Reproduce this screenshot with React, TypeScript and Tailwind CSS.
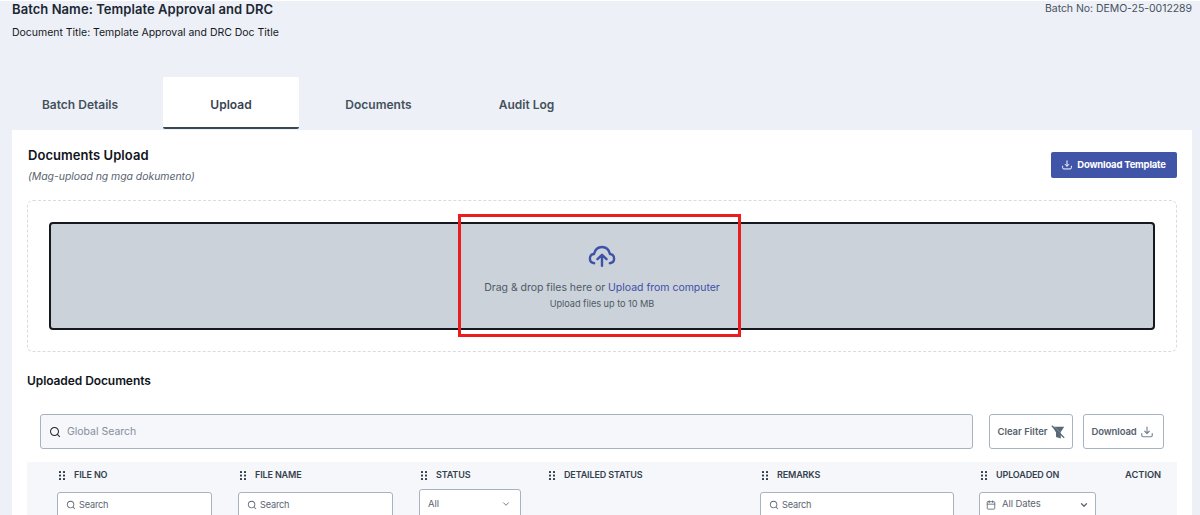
import { RiSearchLine } from "react-icons/ri";
import { Calendar, ChevronDown } from "lucide-react";

function DownloadIcon({ className }: { className?: string }) {
  return (
    <svg viewBox="0 0 24 24" fill="none" stroke="currentColor" strokeWidth={2.4} className={className}>
      <path d="M12 2v12.500M7.500 10.500l4.500 4.500 4.500-4.500M1.500 15v3.500A3 3 0 0 0 4.500 21.500h15a3 3 0 0 0 3-3V15" strokeLinecap="round" strokeLinejoin="round" />
    </svg>
  );
}

function CloudIcon() {
  return (
    <svg viewBox="0 0 28 22" fill="none" stroke="currentColor" strokeWidth={2.4} strokeLinecap="round" strokeLinejoin="round" className="w-7 h-[22px] text-[#3f51a8]">
      <path d="M6.200 18.200C3.600 18 1.900 16 1.900 13.600C1.900 11.200 3.600 9.300 6 9C7 4.800 10 2 14 2C18 2 21 4.800 22 9C24.400 9.300 26.100 11.200 26.100 13.600C26.100 16 24.400 18 21.800 18.200" />
      <path d="M14 20.800V10.500M9.500 14.200L14 9.800l4.500 4.400" />
    </svg>
  );
}

function FilterOffIcon() {
  return (
    <svg viewBox="0 0 14 14" className="size-3.5 text-[#5b6876]">
      <path d="M1.500 1.800H13.200L9.800 7v6.500L5 12V7.500Z" fill="currentColor" />
      <path d="M2.200 .8L13.800 11.800" stroke="#fff" strokeWidth={0.3} />
      <path d="M.8 .8L13.200 12.800" stroke="currentColor" strokeWidth={1.2} />
    </svg>
  );
}

function Grip() {
  return (
    <svg viewBox="0 0 6 9" className="w-1.5 h-[9px] fill-[#2f3a47]">
      {[0, 3.5, 7].map((y) => (
        <g key={y}>
          <rect x="0" y={y} width="2" height="2" rx="0.5" />
          <rect x="4" y={y} width="2" height="2" rx="0.5" />
        </g>
      ))}
    </svg>
  );
}

function ColumnSearch({ className }: { className: string }) {
  return (
    <div className={`h-[26px] bg-white border border-[#a9b2bf] rounded-[3px] flex items-center pl-2 pb-px gap-[3px] text-[#5b6571] ${className}`}>
      <RiSearchLine className="size-2.5" />
      <span className="text-[9.2px] tracking-[-0.2px]">Search</span>
    </div>
  );
}

const columns = ["FILE NO", "FILE NAME", "STATUS", "DETAILED STATUS", "REMARKS", "UPLOADED ON"];

export default function App() {
  return (
    <div className="w-[1200px] h-[515px] overflow-hidden bg-[#edf0f6] border-t border-white font-['Inter',sans-serif]">
      <header className="h-[76px] pl-3 pr-2 flex justify-between">
        <div>
          <h1 className="text-[13px] leading-[17px] tracking-[0.06px] font-semibold text-[#1b2733]">Batch Name: Template Approval and DRC</h1>
          <p className="mt-[7px] text-[10.5px] leading-4 tracking-[-0.02px] text-[#15191e]">Document Title: Template Approval and DRC Doc Title</p>
        </div>
        <p className="text-[10.5px] leading-[15px] tracking-[-0.05px] text-[#47525e]">Batch No: DEMO-25-0012289</p>
      </header>

      <nav className="h-[53px] pl-3 flex text-[12px] font-semibold text-[#44505c]">
        <div className="w-[136px] h-[52px] pt-[3px] flex items-center justify-center">Batch Details</div>
        <div className="ml-[15px] w-[136px] h-[52px] pt-[5px] flex items-center justify-center bg-white border-b-2 border-[#374955] rounded-[2px] text-[#37434f]">Upload</div>
        <div className="ml-[11px] w-[137px] h-[52px] pt-[3px] flex items-center justify-center">Documents</div>
        <div className="ml-[11px] w-[137px] h-[52px] pt-[3px] flex items-center justify-center">Audit Log</div>
      </nav>

      <main className="mx-2 ml-3 h-[400px] bg-white px-[15px]">
        <div className="h-[70px] flex justify-between">
          <div className="pt-4">
            <h2 className="pl-px text-[13px] leading-[18px] tracking-[0.05px] font-semibold text-[#10141b]">Documents Upload</h2>
            <p className="mt-[5px] pl-px text-[10.5px] leading-4 tracking-[-0.06px] italic text-[#5a6470]">(Mag-upload ng mga dokumento)</p>
          </div>
          <button className="mt-[22px] w-[126px] h-[26px] rounded-[2px] bg-[#4054a8] text-white text-[9.5px] tracking-[-0.2px] font-bold flex items-center justify-center gap-[5px]">
            <DownloadIcon className="size-2.5" />
            Download Template
          </button>
        </div>

        <div className="relative h-[152px] border border-dashed border-[#d8dce1] rounded-md px-[21px] pt-[21px]">
          <div className="h-[108px] bg-[#cbd2da] border-2 border-[#15181c] rounded-[4px] flex flex-col items-center pt-[21px]">
            <CloudIcon />
            <p className="mt-[13px] text-[10.5px] leading-4 tracking-[-0.02px] text-[#4e5a66]">
              Drag &amp; drop files here or <span className="text-[#3f4fa6]">Upload from computer</span>
            </p>
            <p className="mt-px text-[9.2px] leading-[14px] tracking-[-0.03px] text-[#4e5a66]">Upload files up to 10 MB</p>
          </div>
          <div className="absolute left-[430px] top-[13px] w-[283px] h-[123px] border-[3px] border-[#ec1b1e]" />
        </div>

        <h2 className="mt-5 text-[12px] leading-[18px] tracking-[-0.08px] font-semibold text-[#10141b]">Uploaded Documents</h2>

        <div className="mt-6 ml-[13px] h-[35px] flex text-[#56616e]">
          <div className="w-[933px] h-[35px] bg-[#f5f7fb] border border-[#a9b2bf] rounded-[3px] flex items-center pl-2 gap-1.5">
            <RiSearchLine className="size-3 text-[#1f252c]" />
            <span className="pt-px text-[10.5px] tracking-[-0.02px] text-[#868e9b]">Global Search</span>
          </div>
          <button className="ml-4 w-[84px] pt-px border border-[#a9b2bf] rounded-[3px] flex items-center justify-center gap-[3px] text-[9.5px] font-semibold">
            Clear Filter
            <FilterOffIcon />
          </button>
          <button className="ml-2.5 w-[81px] pt-px pr-[3px] border border-[#a9b2bf] rounded-[3px] flex items-center justify-center gap-1 text-[9.5px] tracking-[-0.1px] font-semibold">
            Download
            <DownloadIcon className="size-3 text-[#7b8794]" />
          </button>
        </div>

        <div className="mt-[13px] h-[60px] bg-[#f5f7fa] pl-[30px]">
          <div className="h-[27px] pb-px grid grid-cols-[181px_181px_128px_213px_219px_146px_1fr] items-center text-[9.3px] font-semibold text-[#36414d]">
            {columns.map((name) => (
              <div key={name} className="flex items-center gap-[9px] pl-[2px] text-[9px] tracking-[-0.14px]">
                <Grip />
                {name}
              </div>
            ))}
            <div>ACTION</div>
          </div>
          <div className="grid grid-cols-[181px_181px_341px_219px_1fr] pt-[3px]">
            <ColumnSearch className="w-[155px]" />
            <ColumnSearch className="w-[155px]" />
            <div className="-mt-[3px] w-[102px] h-[30px] bg-white border border-[#a9b2bf] rounded-[3px] flex items-center justify-between pl-2 pr-[9px] text-[9.5px] text-[#5b6571]">
              All
              <ChevronDown className="size-2.5" />
            </div>
            <ColumnSearch className="w-[194px]" />
            <div className="w-[117px] h-[26px] pb-px bg-white border border-[#a9b2bf] rounded-[3px] flex items-center pl-1.5 pr-[6px] text-[9.5px] text-[#5b6571]">
              <Calendar className="size-2.5" />
              <span className="ml-1.5 flex-1 tracking-[-0.1px]">All Dates</span>
              <ChevronDown className="size-2.5" strokeWidth={3} />
            </div>
          </div>
        </div>
      </main>
    </div>
  );
}
